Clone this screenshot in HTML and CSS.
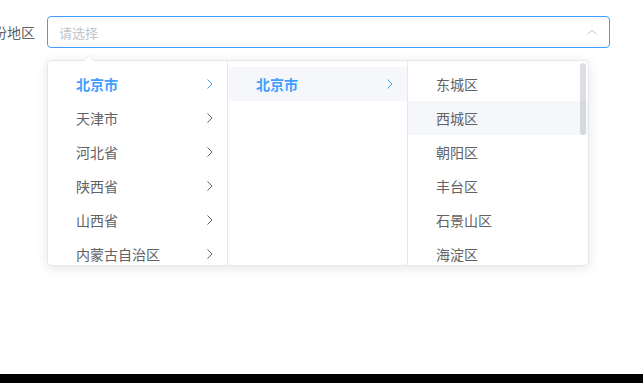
FILE: index.html
```html
<!DOCTYPE html>
<html lang="zh-CN">
<head>
  <meta charset="UTF-8">
  <meta name="viewport" content="width=device-width, initial-scale=1.0">
  <title>省份地区</title>
  <link rel="stylesheet" href="styles.css">
</head>
<body>

<div class="page">
  <div class="form-item">
    <label class="form-label">省份地区</label>
    <div class="cascader">
      <div class="cascader-input">
        <span class="placeholder">请选择</span>
        <svg class="suffix" viewBox="0 0 10 6"><polyline points="0.5,5.5 5,1 9.5,5.5"/></svg>
      </div>

      <div class="cascader-panel">
        <div class="popper-arrow"></div>

        <div class="menu">
          <ul class="menu-list">
            <li class="node is-active"><span>北京市</span><svg class="node-arrow" viewBox="0 0 6 10"><polyline points="0.5,0.5 5,5 0.5,9.5"/></svg></li>
            <li class="node"><span>天津市</span><svg class="node-arrow" viewBox="0 0 6 10"><polyline points="0.5,0.5 5,5 0.5,9.5"/></svg></li>
            <li class="node"><span>河北省</span><svg class="node-arrow" viewBox="0 0 6 10"><polyline points="0.5,0.5 5,5 0.5,9.5"/></svg></li>
            <li class="node"><span>陕西省</span><svg class="node-arrow" viewBox="0 0 6 10"><polyline points="0.5,0.5 5,5 0.5,9.5"/></svg></li>
            <li class="node"><span>山西省</span><svg class="node-arrow" viewBox="0 0 6 10"><polyline points="0.5,0.5 5,5 0.5,9.5"/></svg></li>
            <li class="node"><span>内蒙古自治区</span><svg class="node-arrow" viewBox="0 0 6 10"><polyline points="0.5,0.5 5,5 0.5,9.5"/></svg></li>
          </ul>
        </div>

        <div class="menu">
          <ul class="menu-list">
            <li class="node is-active in-path"><span>北京市</span><svg class="node-arrow" viewBox="0 0 6 10"><polyline points="0.5,0.5 5,5 0.5,9.5"/></svg></li>
          </ul>
        </div>

        <div class="menu menu-last">
          <ul class="menu-list">
            <li class="node"><span>东城区</span></li>
            <li class="node is-hover"><span>西城区</span></li>
            <li class="node"><span>朝阳区</span></li>
            <li class="node"><span>丰台区</span></li>
            <li class="node"><span>石景山区</span></li>
            <li class="node"><span>海淀区</span></li>
          </ul>
          <div class="menu-bar"></div>
        </div>
      </div>
    </div>
  </div>
</div>

</body>
</html>
```

FILE: styles.css
```css
html {
  background-color: #000;
}
body {
  margin: 0;
  font-family: "Noto Sans CJK SC", "Noto Sans", sans-serif;
}
.page {
  height: 374px;
  background-color: #fff;
  overflow: hidden;
}
.form-item {
  display: flex;
  align-items: flex-start;
  padding-top: 16px;
  margin-left: -21px;
}
.form-label {
  width: 68px;
  padding-right: 12px;
  box-sizing: border-box;
  text-align: right;
  font-size: 14px;
  line-height: 32px;
  color: #606266;
}
.cascader {
  position: relative;
  width: 563px;
}
.cascader-input {
  height: 32px;
  box-sizing: border-box;
  border: 1px solid #409eff;
  border-radius: 4px;
  display: flex;
  align-items: center;
  justify-content: space-between;
  padding: 0 12px 0 11px;
}
.placeholder {
  font-size: 13px;
  color: #c0c4cc;
}
.suffix {
  width: 10px;
  height: 6px;
  fill: none;
  stroke: #c0c4cc;
  stroke-width: 1;
}
.cascader-panel {
  position: absolute;
  top: 44px;
  left: 0;
  display: flex;
  background-color: #fff;
  border: 1px solid #e4e7ed;
  border-radius: 4px;
  box-shadow: 0 2px 12px 0 rgba(0, 0, 0, 0.1);
}
.popper-arrow {
  position: absolute;
  top: -6px;
  left: 35px;
  width: 0;
  height: 0;
  border: 6px solid transparent;
  border-top-width: 0;
  border-bottom-color: #e4e7ed;
}
.popper-arrow::after {
  content: "";
  position: absolute;
  top: 1px;
  left: -6px;
  border: 6px solid transparent;
  border-top-width: 0;
  border-bottom-color: #fff;
}
.menu {
  position: relative;
  width: 180px;
  height: 204px;
  box-sizing: border-box;
  border-right: 1px solid #e4e7ed;
  overflow: hidden;
}
.menu-last {
  border-right: none;
}
.menu-list {
  list-style: none;
  margin: 0;
  padding: 6px 0;
}
.node {
  height: 34px;
  padding: 0 14px 0 28px;
  display: flex;
  align-items: center;
  justify-content: space-between;
  font-size: 14px;
  color: #606266;
}
.node.is-active {
  color: #409eff;
  font-weight: bold;
}
.node.in-path,
.node.is-hover {
  background-color: #f5f7fa;
}
.node-arrow {
  width: 6px;
  height: 10px;
  fill: none;
  stroke: currentColor;
  stroke-width: 1;
}
.menu-bar {
  position: absolute;
  top: 2px;
  right: 2px;
  width: 6px;
  height: 72px;
  border-radius: 4px;
  background-color: rgba(144, 147, 153, 0.3);
}
```
